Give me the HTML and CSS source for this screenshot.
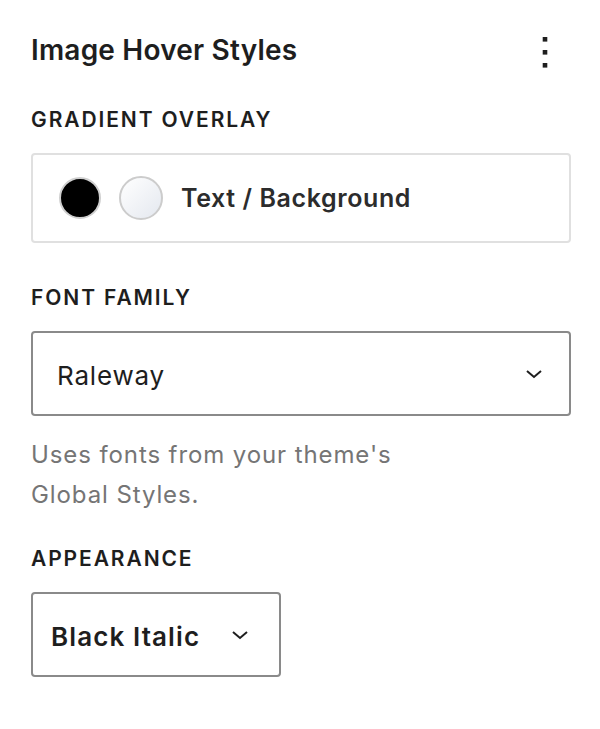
FILE: index.html
```html
<!DOCTYPE html>
<html lang="en">
<head>
    <meta charset="UTF-8">
    <meta name="viewport" content="width=device-width, initial-scale=1.0">
    <title>Image Hover Styles</title>
    <link rel="stylesheet" href="styles.css">
</head>
<body>
    <div class="panel">
        <div class="panel-header">
            <h2>Image Hover Styles</h2>
            <button class="menu-btn" aria-label="Options">
                <svg width="8" height="30" viewBox="0 0 8 30">
                    <rect x="1.7" y="2" width="4.6" height="4.6" fill="#1e1e1e"/>
                    <rect x="1.7" y="15" width="4.6" height="4.6" fill="#1e1e1e"/>
                    <rect x="1.7" y="28" width="4.6" height="4.6" fill="#1e1e1e"/>
                </svg>
            </button>
        </div>

        <div class="field">
            <div class="label">Gradient Overlay</div>
            <div class="color-box">
                <span class="swatch swatch-dark"></span>
                <span class="swatch swatch-light"></span>
                <span class="color-text">Text / Background</span>
            </div>
        </div>

        <div class="field field-help">
            <div class="label">Font Family</div>
            <div class="select select-wide">
                <span>Raleway</span>
                <svg class="chevron" width="18" height="10" viewBox="0 0 18 10">
                    <path d="M2 2 L9 8 L16 2" fill="none" stroke="#1e1e1e" stroke-width="2"/>
                </svg>
            </div>
            <p class="help">Uses fonts from your theme's<br>Global Styles.</p>
        </div>

        <div class="field">
            <div class="label">Appearance</div>
            <div class="select select-small">
                <span>Black Italic</span>
                <svg class="chevron" width="18" height="10" viewBox="0 0 18 10">
                    <path d="M2 2 L9 8 L16 2" fill="none" stroke="#1e1e1e" stroke-width="2"/>
                </svg>
            </div>
        </div>
    </div>
</body>
</html>
```

FILE: styles.css
```css
body {
    margin: 0;
    background-color: #ffffff;
    font-family: Inter, "Noto Sans", sans-serif;
    color: #1e1e1e;
}

.panel {
    padding: 30px 29px 40px 31px;
}

.panel-header {
    display: flex;
    align-items: center;
    justify-content: space-between;
    height: 40px;
    margin-bottom: 35px;
}

.panel-header h2 {
    margin: 0;
    font-size: 28px;
    line-height: 40px;
    font-weight: 600;
    letter-spacing: 0.2px;
}

.menu-btn {
    border: none;
    background: none;
    padding: 0;
    margin-right: 22px;
    display: flex;
}

.menu-btn svg {
    height: 36px;
}

.field {
    margin-bottom: 40px;
}

.field-help {
    margin-bottom: 29px;
}

.label {
    text-transform: uppercase;
    font-size: 21px;
    font-weight: 600;
    letter-spacing: 1.9px;
    line-height: 30px;
    margin-bottom: 18px;
}

.color-box {
    display: flex;
    align-items: center;
    height: 90px;
    box-sizing: border-box;
    border: 2px solid #e0e0e0;
    border-radius: 4px;
    padding-left: 26px;
}

.swatch {
    width: 42px;
    height: 42px;
    border-radius: 50%;
    box-sizing: border-box;
    margin-right: 18px;
}

.swatch-dark {
    background-color: #000000;
    border: 2px solid #cfcfcf;
}

.swatch-light {
    background: linear-gradient(135deg, #ffffff, #e4e8ef);
    border: 2px solid #cccccc;
    width: 44px;
    height: 44px;
}

.color-text {
    font-size: 25px;
    font-weight: 600;
    letter-spacing: 0.6px;
    color: #2c2c2c;
}

.select {
    display: flex;
    align-items: center;
    justify-content: space-between;
    height: 85px;
    box-sizing: border-box;
    border: 2px solid #8a8a8a;
    border-radius: 4px;
    font-size: 26px;
    letter-spacing: 0.8px;
    padding-top: 4px;
}

.select .chevron {
    margin-top: -4px;
}

.select-wide {
    padding-left: 24px;
    padding-right: 26px;
}

.select-small {
    width: 250px;
    padding-left: 18px;
    padding-right: 30px;
}

.select-small span {
    font-weight: 600;
    letter-spacing: 1.1px;
}

.help {
    margin: 19px 0 0;
    color: #757575;
    font-size: 24px;
    letter-spacing: 0.9px;
    line-height: 40px;
}
```
